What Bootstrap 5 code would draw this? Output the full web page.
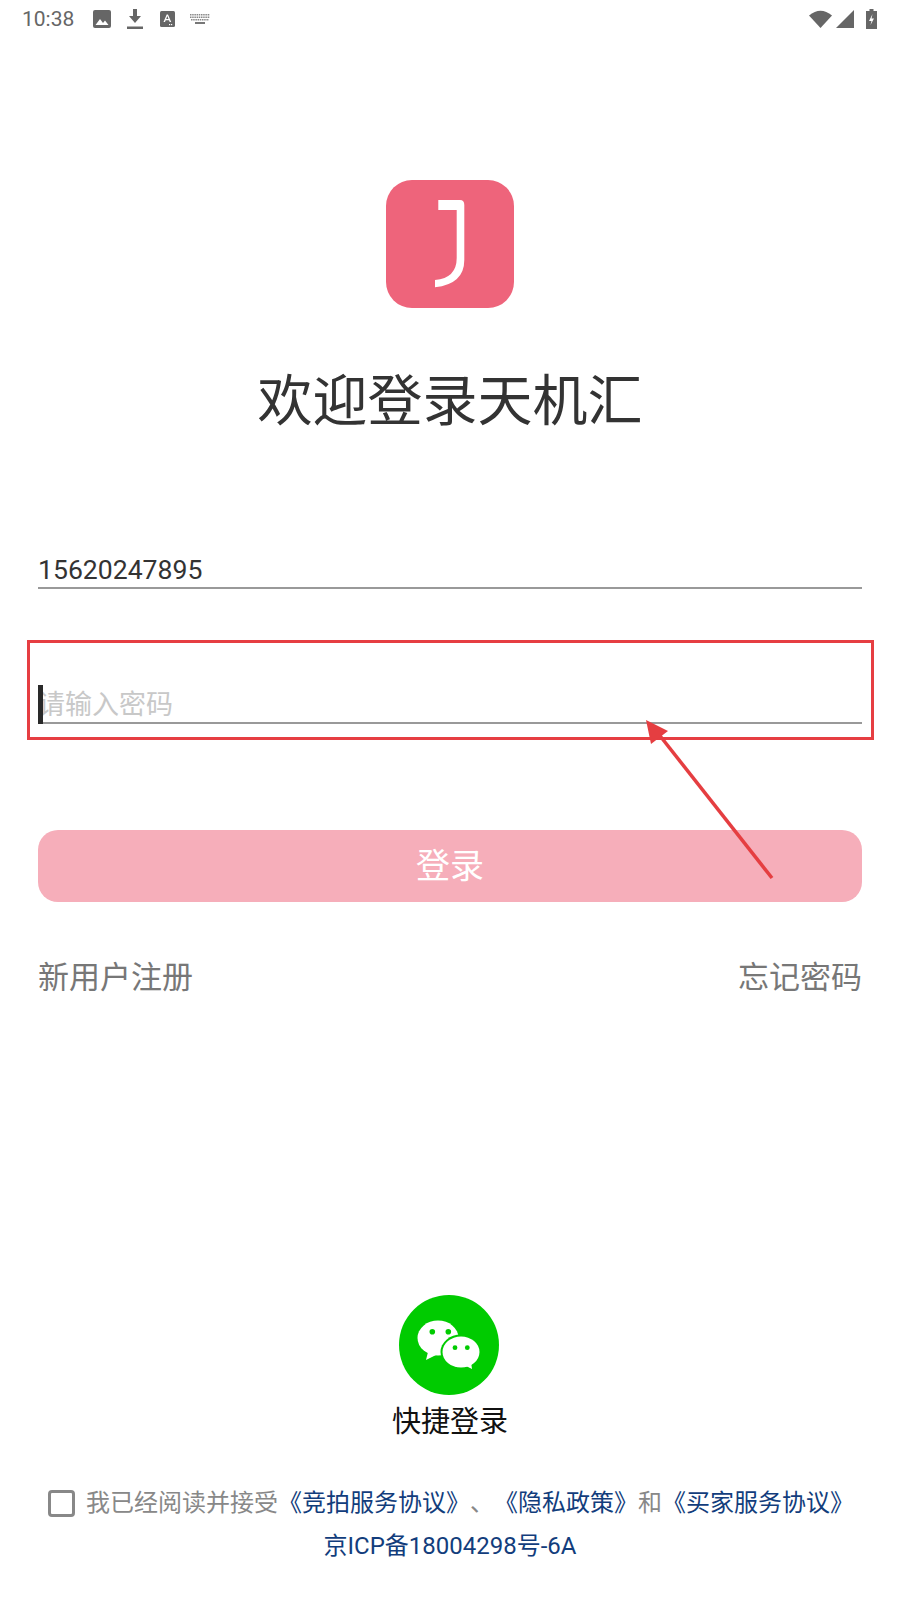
<!DOCTYPE html>
<html lang="zh-CN">
<head>
  <meta charset="UTF-8" />
  <meta name="viewport" content="width=device-width, initial-scale=1" />
  <title>欢迎登录天机汇</title>
  <link href="https://cdn.jsdelivr.net/npm/bootstrap@5.3.0/dist/css/bootstrap.min.css" rel="stylesheet" />
  <style>
    body { font-family: Roboto, "Noto Sans CJK SC", sans-serif; background: #fff; }
    .screen { width: 900px; height: 1600px; position: relative; overflow: hidden; }
    .status-bar { height: 36px; padding: 1px 23px 0 22px; color: #666; font-size: 21px; }
    .status-left { gap: 16px; }
    .status-time { margin-right: 3px; line-height: 36px; }
    .status-a { margin-left: 1px; margin-right: -1px; }
    .login-body { padding: 0 38px; }
    .app-logo { width: 128px; height: 128px; margin-top: 144px; }
    .welcome { margin: 58px 0 0; font-size: 55px; line-height: 70px; color: #333; font-weight: 400; }
    .field { height: 50px; position: relative; }
    .field-phone { margin-top: 103px; }
    .field-pass { margin-top: 85px; }
    .field .form-control { height: 50px; padding: 12px 0 0; border: 0; border-bottom: 2px solid #999; border-radius: 0; box-shadow: none; font-size: 26.600px; line-height: 36px; color: #333; background: transparent; }
    .field .form-control::placeholder { color: #c8c8c8; font-size: 27px; }
    .text-caret { position: absolute; left: 0; bottom: 0; width: 5px; height: 39px; background: #2a2a2a; }
    .btn-login { margin-top: 106px; height: 72px; font-size: 34px; line-height: 1; color: #fff; background: #f6aeba; border: 0; border-radius: 20px; }
    .btn-login:disabled { color: #fff; background: #f6aeba; opacity: 1; }
    .login-links { margin-top: 56px; font-size: 31px; line-height: 40px; color: #777; }
    .login-links a { color: inherit; text-decoration: none; }
    .wechat-icon { width: 100px; height: 100px; margin-top: 297px; margin-right: 2px; }
    .wechat-label { margin-top: 7px; font-size: 29px; line-height: 40px; color: #111; }
    .agree { margin-top: 41px; padding-left: 2px; font-size: 24px; line-height: 40px; color: #888; text-spacing-trim: space-all; }
    .agree .form-check-input { width: 27px; height: 27px; margin: 0 11px 0 0; border: 3px solid #888; border-radius: 4px; flex: none; }
    .agree a, .icp { color: #123d7c; text-decoration: none; }
    .icp { margin-top: 3px; font-size: 24px; line-height: 40px; }
    .note-box { position: absolute; left: 27px; top: 640px; width: 847px; height: 100px; border: 3px solid #e63e42; pointer-events: none; }
    .note-arrow { position: absolute; left: 0; top: 0; pointer-events: none; }
  </style>
</head>
<body>
  <div class="screen">
    <div class="status-bar d-flex align-items-center justify-content-between">
      <div class="status-left d-flex align-items-center">
        <span class="status-time">10:38</span>
        <svg width="18" height="18" viewBox="0 0 18 18"><rect width="18" height="18" rx="2" fill="#666"/><path d="M2.500 15 7 9l3 4 2-2.500 3.500 4.500z" fill="#fff"/></svg>
        <svg width="16" height="20" viewBox="0 0 16 20"><path d="M6 0h4v7h4l-6 7-6-7h4z" fill="#666"/><rect y="17.500" width="16" height="2.500" fill="#666"/></svg>
        <svg class="status-a" width="15" height="16" viewBox="0 0 15 16"><rect width="15" height="16" rx="1.500" fill="#666"/><path d="M3.500 11 6.700 3.500h1.300L11.200 11H9.700L9 9.200H5.700L5 11zM6.200 8h2.300L7.350 5z" fill="#fff"/><rect x="9" y="13" width="1.200" height="1.200" fill="#fff"/><rect x="11" y="13" width="1.200" height="1.200" fill="#fff"/></svg>
        <svg width="20" height="10" viewBox="0 0 20 10"><g fill="none" stroke="#888" stroke-width="1.500" stroke-dasharray="1.500 .7"><path d="M0 .8h20M0 3.300h20M1 5.800h18"/></g><rect x="5" y="8" width="10" height="2" fill="#777"/></svg>
      </div>
      <div class="d-flex align-items-center gap-1">
        <svg width="23" height="18" viewBox="0 0 23 18"><path d="M0 5.500Q11.500-4 23 5.500L11.500 18z" fill="#666"/></svg>
        <svg width="18" height="18" viewBox="0 0 18 18"><path d="M18 0v18H0z" fill="#666"/></svg>
        <svg width="11" height="20" viewBox="0 0 11 20" class="ms-2"><path d="M3.500 0h4v2H11v18H0V2h3.500z" fill="#666"/><path d="M6.500 5 3 12h2.500l-1 4 3.500-6.500H5.500z" fill="#fff"/></svg>
      </div>
    </div>

    <div class="login-body d-flex flex-column">
      <svg class="app-logo align-self-center" viewBox="0 0 128 128">
        <rect width="128" height="128" rx="26" fill="#ee647b"/>
        <path d="M52.300 20H74Q78.300 20 78.300 25V80Q78.300 104 49 107.300V100Q70.700 98 70.700 78V30H52.300z" fill="#fff"/>
      </svg>
      <h1 class="welcome text-center">欢迎登录天机汇</h1>

      <div class="field field-phone">
        <input type="text" class="form-control" value="15620247895" />
      </div>
      <div class="field field-pass">
        <input type="password" class="form-control" placeholder="请输入密码" />
        <span class="text-caret"></span>
      </div>

      <button type="button" class="btn btn-login w-100" disabled>登录</button>

      <div class="login-links d-flex justify-content-between">
        <a href="#">新用户注册</a>
        <a href="#">忘记密码</a>
      </div>

      <svg class="wechat-icon align-self-center" viewBox="0 0 100 100">
        <circle cx="50" cy="50" r="50" fill="#00cb00"/>
        <ellipse cx="39" cy="43" rx="20.500" ry="17.500" fill="#fff"/>
        <path d="M29 57l-2 8 10-5z" fill="#fff"/>
        <ellipse cx="62" cy="57" rx="20.500" ry="17.500" fill="#00cb00"/>
        <ellipse cx="62" cy="57" rx="18.500" ry="15.500" fill="#fff"/>
        <path d="M67 71l6 3-1-7z" fill="#fff"/>
        <g fill="#00cb00">
          <circle cx="33.300" cy="36.700" r="2.800"/><circle cx="49.300" cy="36.700" r="2.800"/>
          <circle cx="56" cy="52.700" r="2.400"/><circle cx="68.300" cy="52.700" r="2.400"/>
        </g>
      </svg>
      <div class="wechat-label text-center">快捷登录</div>

      <div class="agree d-flex align-items-center justify-content-center">
        <input type="checkbox" class="form-check-input" />
        <span>我已经阅读并接受<a href="#">《竞拍服务协议》</a>、<a href="#">《隐私政策》</a>和<a href="#">《买家服务协议》</a></span>
      </div>
      <div class="icp text-center">京ICP备18004298号-6A</div>
    </div>

    <div class="note-box"></div>
    <svg class="note-arrow" width="900" height="1600" viewBox="0 0 900 1600">
      <path d="M772 878 657 732" stroke="#e53e41" stroke-width="3.500" fill="none"/>
      <path d="M646 720 668 731 651 744z" fill="#e53e41"/>
    </svg>
  </div>
  <script src="https://cdn.jsdelivr.net/npm/bootstrap@5.3.0/dist/js/bootstrap.bundle.min.js"></script>
</body>
</html>
